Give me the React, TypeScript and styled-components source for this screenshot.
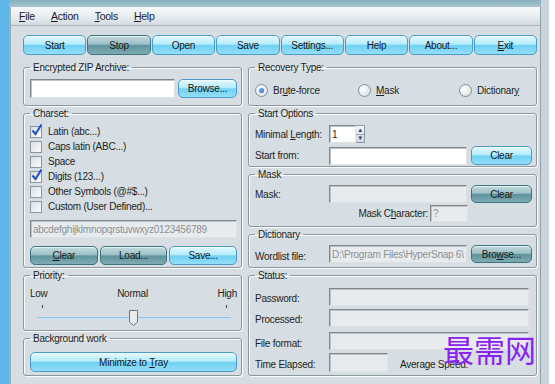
import React from 'react';
import styled, { createGlobalStyle, css } from 'styled-components';

const GlobalStyle = createGlobalStyle`
  html, body { margin: 0; padding: 0; background: #fff; }
  body {
    font-family: "Liberation Sans", Arial, sans-serif;
    font-size: 10px;
    letter-spacing: -0.25px;
    color: #1d1f21;
  }
  * { box-sizing: border-box; }
`;

const Page = styled.div`
  position: relative;
  width: 555px;
  height: 384px;
  overflow: hidden;
  background: #fff;
`;

const Window = styled.div`
  width: 549px;
  height: 384px;
  display: flex;
  flex-direction: column;
  border-left: 9px solid #5cb6e7;
  border-right: 8px solid #c9d5dd;
  background: #c9d5dd;
`;

const TitleStrip = styled.div`
  height: 7px;
  background: linear-gradient(#86aebf, #a9c3d0);
`;

const Client = styled.div`
  flex: 1;
  display: flex;
  flex-direction: column;
  background: #d7dee3;
  border-left: 2px solid #a3adb4;
  border-right: 1px solid #96a2aa;
`;

const MenuBar = styled.div`
  height: 19px;
  display: flex;
  align-items: center;
  gap: 16px;
  padding-left: 8px;
  font-size: 10.5px;
  background: linear-gradient(#f7f9fb, #e6ebef 60%, #d3dbe1);
  border-bottom: 1px solid #a9b4bc;
`;

const MenuItem = styled.span`
  color: #1a1c1e;
`;

const Key = styled.span`
  text-decoration: underline;
`;

const Toolbar = styled.div`
  display: grid;
  grid-template-columns: repeat(8, 1fr);
  gap: 1px;
  padding: 9px 3px 0 12px;
`;

const Button = styled.button<{ $tone?: 'aqua' | 'teal'; $w?: number; $h?: number }>`
  font: inherit;
  letter-spacing: inherit;
  color: #15191c;
  width: ${p => (p.$w ? `${p.$w}px` : '100%')};
  height: ${p => p.$h ?? 19}px;
  flex: none;
  margin: 0;
  padding: 0;
  border-radius: 5px;
  box-shadow: inset 0 1px 0 rgba(255, 255, 255, 0.6);
  ${p =>
    p.$tone === 'teal'
      ? css`
          border: 1px solid #3c7580;
          background: linear-gradient(#c4dbdf 0%, #9cc0c6 45%, #5f949e 53%, #80abb3 100%);
        `
      : css`
          border: 1px solid #4a9cc7;
          background: linear-gradient(#e3f8fe 0%, #b6ecfb 45%, #6fd1f3 53%, #94def7 100%);
        `}
`;

const Columns = styled.div`
  display: flex;
  gap: 6px;
  padding: 6px 3px 0 12px;
`;

const Column = styled.div<{ $w: number }>`
  width: ${p => p.$w}px;
  display: flex;
  flex-direction: column;
  gap: 1px;
`;

const Group = styled.fieldset<{ $h: number }>`
  margin: 0;
  min-width: 0;
  height: ${p => p.$h}px;
  padding: 0 4px 0 6px;
  border: 1px solid #8d979e;
  border-radius: 3px;
  box-shadow: inset 1px 1px 0 #fbfcfd, 1px 1px 0 #fbfcfd;
`;

const Legend = styled.legend`
  padding: 0 3px;
  line-height: 13px;
  color: #1d1f21;
`;

const Row = styled.div<{ $top?: number; $h?: number; $gap?: number }>`
  display: flex;
  align-items: center;
  gap: ${p => p.$gap ?? 3}px;
  margin-top: ${p => p.$top ?? 0}px;
  height: ${p => p.$h ?? 18}px;
`;

const Label = styled.span<{ $w?: number; $right?: boolean; $drop?: number }>`
  flex: none;
  width: ${p => (p.$w ? `${p.$w}px` : 'auto')};
  text-align: ${p => (p.$right ? 'right' : 'left')};
  padding-top: ${p => p.$drop ?? 0}px;
  white-space: nowrap;
`;

const Field = styled.input<{ $w?: number; $h?: number; $muted?: boolean }>`
  flex: none;
  width: ${p => (p.$w ? `${p.$w}px` : '100%')};
  height: ${p => p.$h ?? 18}px;
  margin: 0;
  padding: 0 2px;
  font: inherit;
  letter-spacing: inherit;
  color: ${p => (p.$muted ? '#8b9094' : '#1d1f21')};
  background: ${p => (p.$muted ? '#e8ebed' : '#fff')};
  border: 1px solid;
  border-color: #7f878c #dde2e5 #dde2e5 #7f878c;
  box-shadow: inset 1px 1px 0 #bcc3c8;
  outline: none;
`;

const CheckRow = styled.label`
  display: flex;
  align-items: center;
  gap: 6px;
  height: 15px;
`;

const Box = styled.span`
  position: relative;
  flex: none;
  width: 12px;
  height: 12px;
  border: 1px solid #8a98a2;
  background: linear-gradient(135deg, #d9dfe4, #fbfcfd);
`;

const CheckList = styled.div`
  padding-top: 4px;
`;

const ButtonTrio = styled.div`
  display: grid;
  grid-template-columns: repeat(3, 1fr);
  gap: 2px;
  margin-top: 8px;
`;

const ScaleLabels = styled.div`
  display: flex;
  justify-content: space-between;
  line-height: 13px;
  margin-top: 5px;
`;

const SliderArea = styled.div`
  position: relative;
  height: 28px;
  margin: 0 6px 0 7px;
`;

const Tick = styled.span<{ $left: number }>`
  position: absolute;
  top: 5px;
  left: ${p => p.$left}px;
  width: 1px;
  height: 3px;
  background: #444;
`;

const Track = styled.div`
  position: absolute;
  top: 17px;
  left: 0;
  right: 0;
  height: 2px;
  background: #8ec3ea;
  border-bottom: 1px solid #c9e2f4;
`;

const Thumb = styled.svg`
  position: absolute;
  top: 10px;
  left: 92px;
`;

const RadioGrid = styled.div`
  display: grid;
  grid-template-columns: 103px 101px 1fr;
  margin-top: 8px;
  height: 16px;
  align-items: center;
`;

const RadioItem = styled.label`
  display: flex;
  align-items: center;
  gap: 5px;
`;

const Circle = styled.span<{ $on?: boolean }>`
  position: relative;
  flex: none;
  width: 13px;
  height: 13px;
  border-radius: 50%;
  border: 1px solid #7f8e98;
  background: radial-gradient(circle at 35% 35%, #fff, #d3dae0);
  ${p =>
    p.$on &&
    css`
      &::after {
        content: '';
        position: absolute;
        left: 3px;
        top: 3px;
        width: 5px;
        height: 5px;
        border-radius: 50%;
        background: radial-gradient(circle at 40% 40%, #6fb2f5, #1c5cc4);
      }
    `}
`;

const Spin = styled.div`
  display: flex;
  height: 18px;
`;

const SpinArrows = styled.div`
  display: flex;
  flex-direction: column;
  width: 9px;
  border: 1px solid #8c9aa4;
  border-left: none;
  background: linear-gradient(#f3f6f8, #cdd7de);
`;

const Arrow = styled.span<{ $down?: boolean }>`
  flex: 1;
  display: flex;
  align-items: center;
  justify-content: center;
  font-size: 6px;
  line-height: 1;
  color: #2a3a6a;
  ${p => p.$down && 'border-top: 1px solid #9aa7b0;'}
`;

const Watermark = styled.div`
  position: absolute;
  left: 443px;
  top: 333px;
  font-family: "Noto Sans CJK SC", sans-serif;
  font-size: 31px;
  line-height: 1;
  letter-spacing: 0;
  color: #8a22f0;
  pointer-events: none;
`;

const CheckMark = () => (
  <svg
    width="12"
    height="13"
    viewBox="0 0 12 13"
    style={{ position: 'absolute', left: 0, top: -3 }}
  >
    <path d="M1.5 6.5 L4.5 10 L10.5 0.5" fill="none" stroke="#1f4fc4" strokeWidth="2" />
  </svg>
);

const Check = ({ on, children }: { on?: boolean; children: React.ReactNode }) => (
  <CheckRow>
    <Box>{on && <CheckMark />}</Box>
    <span>{children}</span>
  </CheckRow>
);

const Radio = ({ on, children }: { on?: boolean; children: React.ReactNode }) => (
  <RadioItem>
    <Circle $on={on} />
    <span>{children}</span>
  </RadioItem>
);

const tools = ['Start', 'Stop', 'Open', 'Save', 'Settings...', 'Help', 'About...'];

const App: React.FC = () => (
  <>
    <GlobalStyle />
    <Page>
      <Window>
        <TitleStrip />
        <Client>
          <MenuBar>
            <MenuItem><Key>F</Key>ile</MenuItem>
            <MenuItem><Key>A</Key>ction</MenuItem>
            <MenuItem><Key>T</Key>ools</MenuItem>
            <MenuItem><Key>H</Key>elp</MenuItem>
          </MenuBar>

          <Toolbar>
            {tools.map(t => (
              <Button key={t} $h={20} $tone={t === 'Stop' ? 'teal' : 'aqua'}>
                {t}
              </Button>
            ))}
            <Button $h={20}><Key>E</Key>xit</Button>
          </Toolbar>

          <Columns>
            <Column $w={219}>
              <Group $h={45}>
                <Legend>Encrypted ZIP Archive:</Legend>
                <Row $top={5} $h={19}>
                  <Field $w={145} $h={19} readOnly />
                  <Button $w={59}>Browse...</Button>
                </Row>
              </Group>

              <Group $h={161}>
                <Legend>Charset:</Legend>
                <CheckList>
                  <Check on>Latin (abc...)</Check>
                  <Check>Caps latin (ABC...)</Check>
                  <Check>Space</Check>
                  <Check on>Digits (123...)</Check>
                  <Check>Other Symbols (@#$...)</Check>
                  <Check>Custom (User Defined)...</Check>
                </CheckList>
                <Row $top={6}>
                  <Field $muted readOnly value="abcdefghijklmnopqrstuvwxyz0123456789" />
                </Row>
                <ButtonTrio>
                  <Button $tone="teal"><Key>C</Key>lear</Button>
                  <Button $tone="teal">Load...</Button>
                  <Button>Save...</Button>
                </ButtonTrio>
              </Group>

              <Group $h={62}>
                <Legend>Priority:</Legend>
                <ScaleLabels>
                  <span>Low</span>
                  <span>Normal</span>
                  <span>High</span>
                </ScaleLabels>
                <SliderArea>
                  <Tick $left={5} />
                  <Tick $left={189} />
                  <Track />
                  <Thumb width="9" height="16" viewBox="0 0 9 16">
                    <path d="M0.5 0.5 H8.5 V12 L4.5 15.5 L0.5 12 Z" fill="#e9ecee" stroke="#6d7780" />
                  </Thumb>
                </SliderArea>
              </Group>

              <Group $h={44}>
                <Legend>Background work</Legend>
                <Row $top={7} $h={20}>
                  <Button $h={20}>Minimize to <Key>T</Key>ray</Button>
                </Row>
              </Group>
            </Column>

            <Column $w={289}>
              <Group $h={45}>
                <Legend>Recovery Type:</Legend>
                <RadioGrid>
                  <Radio on>Br<Key>u</Key>te-force</Radio>
                  <Radio><Key>M</Key>ask</Radio>
                  <Radio>Dictionar<Key>y</Key></Radio>
                </RadioGrid>
              </Group>

              <Group $h={60}>
                <Legend>Start Options</Legend>
                <Row $top={5} $h={18} $gap={0}>
                  <Label $w={74}>Minimal <Key>L</Key>ength:</Label>
                  <Spin>
                    <Field $w={27} readOnly value="1" />
                    <SpinArrows>
                      <Arrow>▲</Arrow>
                      <Arrow $down>▼</Arrow>
                    </SpinArrows>
                  </Spin>
                </Row>
                <Row $top={3} $h={19} $gap={0}>
                  <Label $w={74}>Start from:</Label>
                  <Field $w={138} readOnly />
                  <Button $w={61} style={{ marginLeft: 4 }}>Clear</Button>
                </Row>
              </Group>

              <Group $h={59}>
                <Legend>Mask</Legend>
                <Row $top={4} $h={18} $gap={0}>
                  <Label $w={74}>Mask:</Label>
                  <Field $w={138} $muted readOnly />
                  <Button $w={61} $h={18} $tone="teal" style={{ marginLeft: 4 }}>Clear</Button>
                </Row>
                <Row $top={2} $h={17} $gap={2}>
                  <Label $w={173} $right>Mask C<Key>h</Key>aracter:</Label>
                  <Field $w={38} $h={17} $muted readOnly value="?" />
                </Row>
              </Group>

              <Group $h={40}>
                <Legend>Dictionary</Legend>
                <Row $top={4} $h={18} $gap={0}>
                  <Label $w={74} $drop={4}>Wordlist file:</Label>
                  <Field $w={138} $muted readOnly value={'D:\\Program Files\\HyperSnap 6\\1\''} />
                  <Button $w={61} $h={18} $tone="teal" style={{ marginLeft: 4 }}>
                    Bro<Key>w</Key>se...
                  </Button>
                </Row>
              </Group>

              <Group $h={107}>
                <Legend>Status:</Legend>
                <Row $top={6} $gap={0}>
                  <Label $w={74} $drop={2}>Password:</Label>
                  <Field $w={200} $muted readOnly />
                </Row>
                <Row $top={3} $gap={0}>
                  <Label $w={74} $drop={3}>Processed:</Label>
                  <Field $w={200} $muted readOnly />
                </Row>
                <Row $top={5} $gap={0}>
                  <Label $w={74} $drop={4}>File format:</Label>
                  <Field $w={200} $muted readOnly />
                </Row>
                <Row $top={3} $h={19} $gap={0}>
                  <Label $w={74} $drop={4}>Time Elapsed:</Label>
                  <Field $w={59} $h={19} $muted readOnly />
                  <Label $drop={4} style={{ marginLeft: 12 }}>Average Speed:</Label>
                </Row>
              </Group>
            </Column>
          </Columns>
        </Client>
      </Window>
      <Watermark>最需网</Watermark>
    </Page>
  </>
);

export default App;
